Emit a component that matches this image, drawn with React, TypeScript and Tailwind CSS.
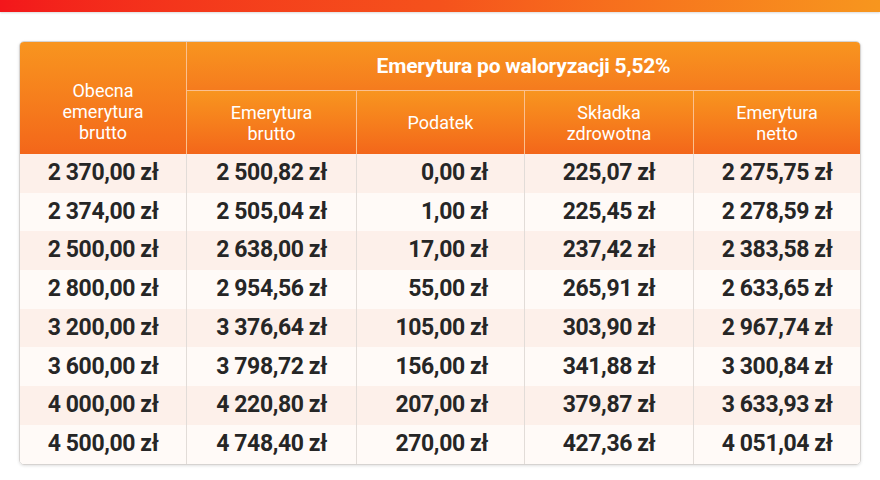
const rows = [
  ["2 370,00 zł", "2 500,82 zł", "0,00 zł", "225,07 zł", "2 275,75 zł"],
  ["2 374,00 zł", "2 505,04 zł", "1,00 zł", "225,45 zł", "2 278,59 zł"],
  ["2 500,00 zł", "2 638,00 zł", "17,00 zł", "237,42 zł", "2 383,58 zł"],
  ["2 800,00 zł", "2 954,56 zł", "55,00 zł", "265,91 zł", "2 633,65 zł"],
  ["3 200,00 zł", "3 376,64 zł", "105,00 zł", "303,90 zł", "2 967,74 zł"],
  ["3 600,00 zł", "3 798,72 zł", "156,00 zł", "341,88 zł", "3 300,84 zł"],
  ["4 000,00 zł", "4 220,80 zł", "207,00 zł", "379,87 zł", "3 633,93 zł"],
  ["4 500,00 zł", "4 748,40 zł", "270,00 zł", "427,36 zł", "4 051,04 zł"],
];

const cols = "grid grid-cols-[167px_170px_168px_169px_166px]";
const headCell =
  "flex items-center justify-center text-center bg-gradient-to-b from-[#f8951f] to-[#f3661a] text-white text-[18px] leading-[21px]";

export default function App() {
  return (
    <div className="w-[880px] h-[480px] bg-white overflow-hidden font-['Roboto','Liberation_Sans',sans-serif]">
      <div className="h-3 bg-gradient-to-r from-[#f3161b] via-[#f5521c] to-[#f7961e] shadow-[0_1px_2px_rgba(0,0,0,0.15)]" />
      <div className="px-[19px] pt-[29px] flex">
        <div className="w-[842px] rounded-[5px] border border-[#d6d3d1] overflow-hidden shadow-[0_1px_3px_rgba(0,0,0,0.12)]">
          <div className={`${cols} grid-rows-[49px_63px]`}>
            <div className={`${headCell} row-span-2 border-r border-[#fbc08f] pt-[26px]`}>
              Obecna
              <br />
              emerytura
              <br />
              brutto
            </div>
            <div className="col-span-4 flex items-center justify-center bg-gradient-to-b from-[#f8951f] to-[#f57b1e] border-b border-[#fbc08f] text-white text-[21px] font-bold tracking-[-0.2px] pt-[2px]">
              Emerytura po waloryzacji 5,52%
            </div>
            <div className={`${headCell} border-r border-[#fbc08f]`}>
              Emerytura
              <br />
              brutto
            </div>
            <div className={`${headCell} border-r border-[#fbc08f]`}>Podatek</div>
            <div className={`${headCell} border-r border-[#fbc08f]`}>
              Składka
              <br />
              zdrowotna
            </div>
            <div className={headCell}>
              Emerytura
              <br />
              netto
            </div>
          </div>
          {rows.map((r, i) => (
            <div
              key={i}
              className={`${cols} h-[38.7px] text-[23px] font-bold text-[#262626] tracking-[-0.4px] ${
                i % 2 === 0 ? "bg-[#fdf0ea]" : "bg-[#fffaf7]"
              }`}
            >
              <div className="flex items-center justify-center border-r border-[#e2dcd8]">{r[0]}</div>
              <div className="flex items-center justify-center border-r border-[#e2dcd8]">{r[1]}</div>
              <div className="flex items-center justify-end pr-[36px] border-r border-[#e2dcd8]">{r[2]}</div>
              <div className="flex items-center justify-center border-r border-[#e2dcd8]">{r[3]}</div>
              <div className="flex items-center justify-center">{r[4]}</div>
            </div>
          ))}
        </div>
      </div>
    </div>
  );
}
